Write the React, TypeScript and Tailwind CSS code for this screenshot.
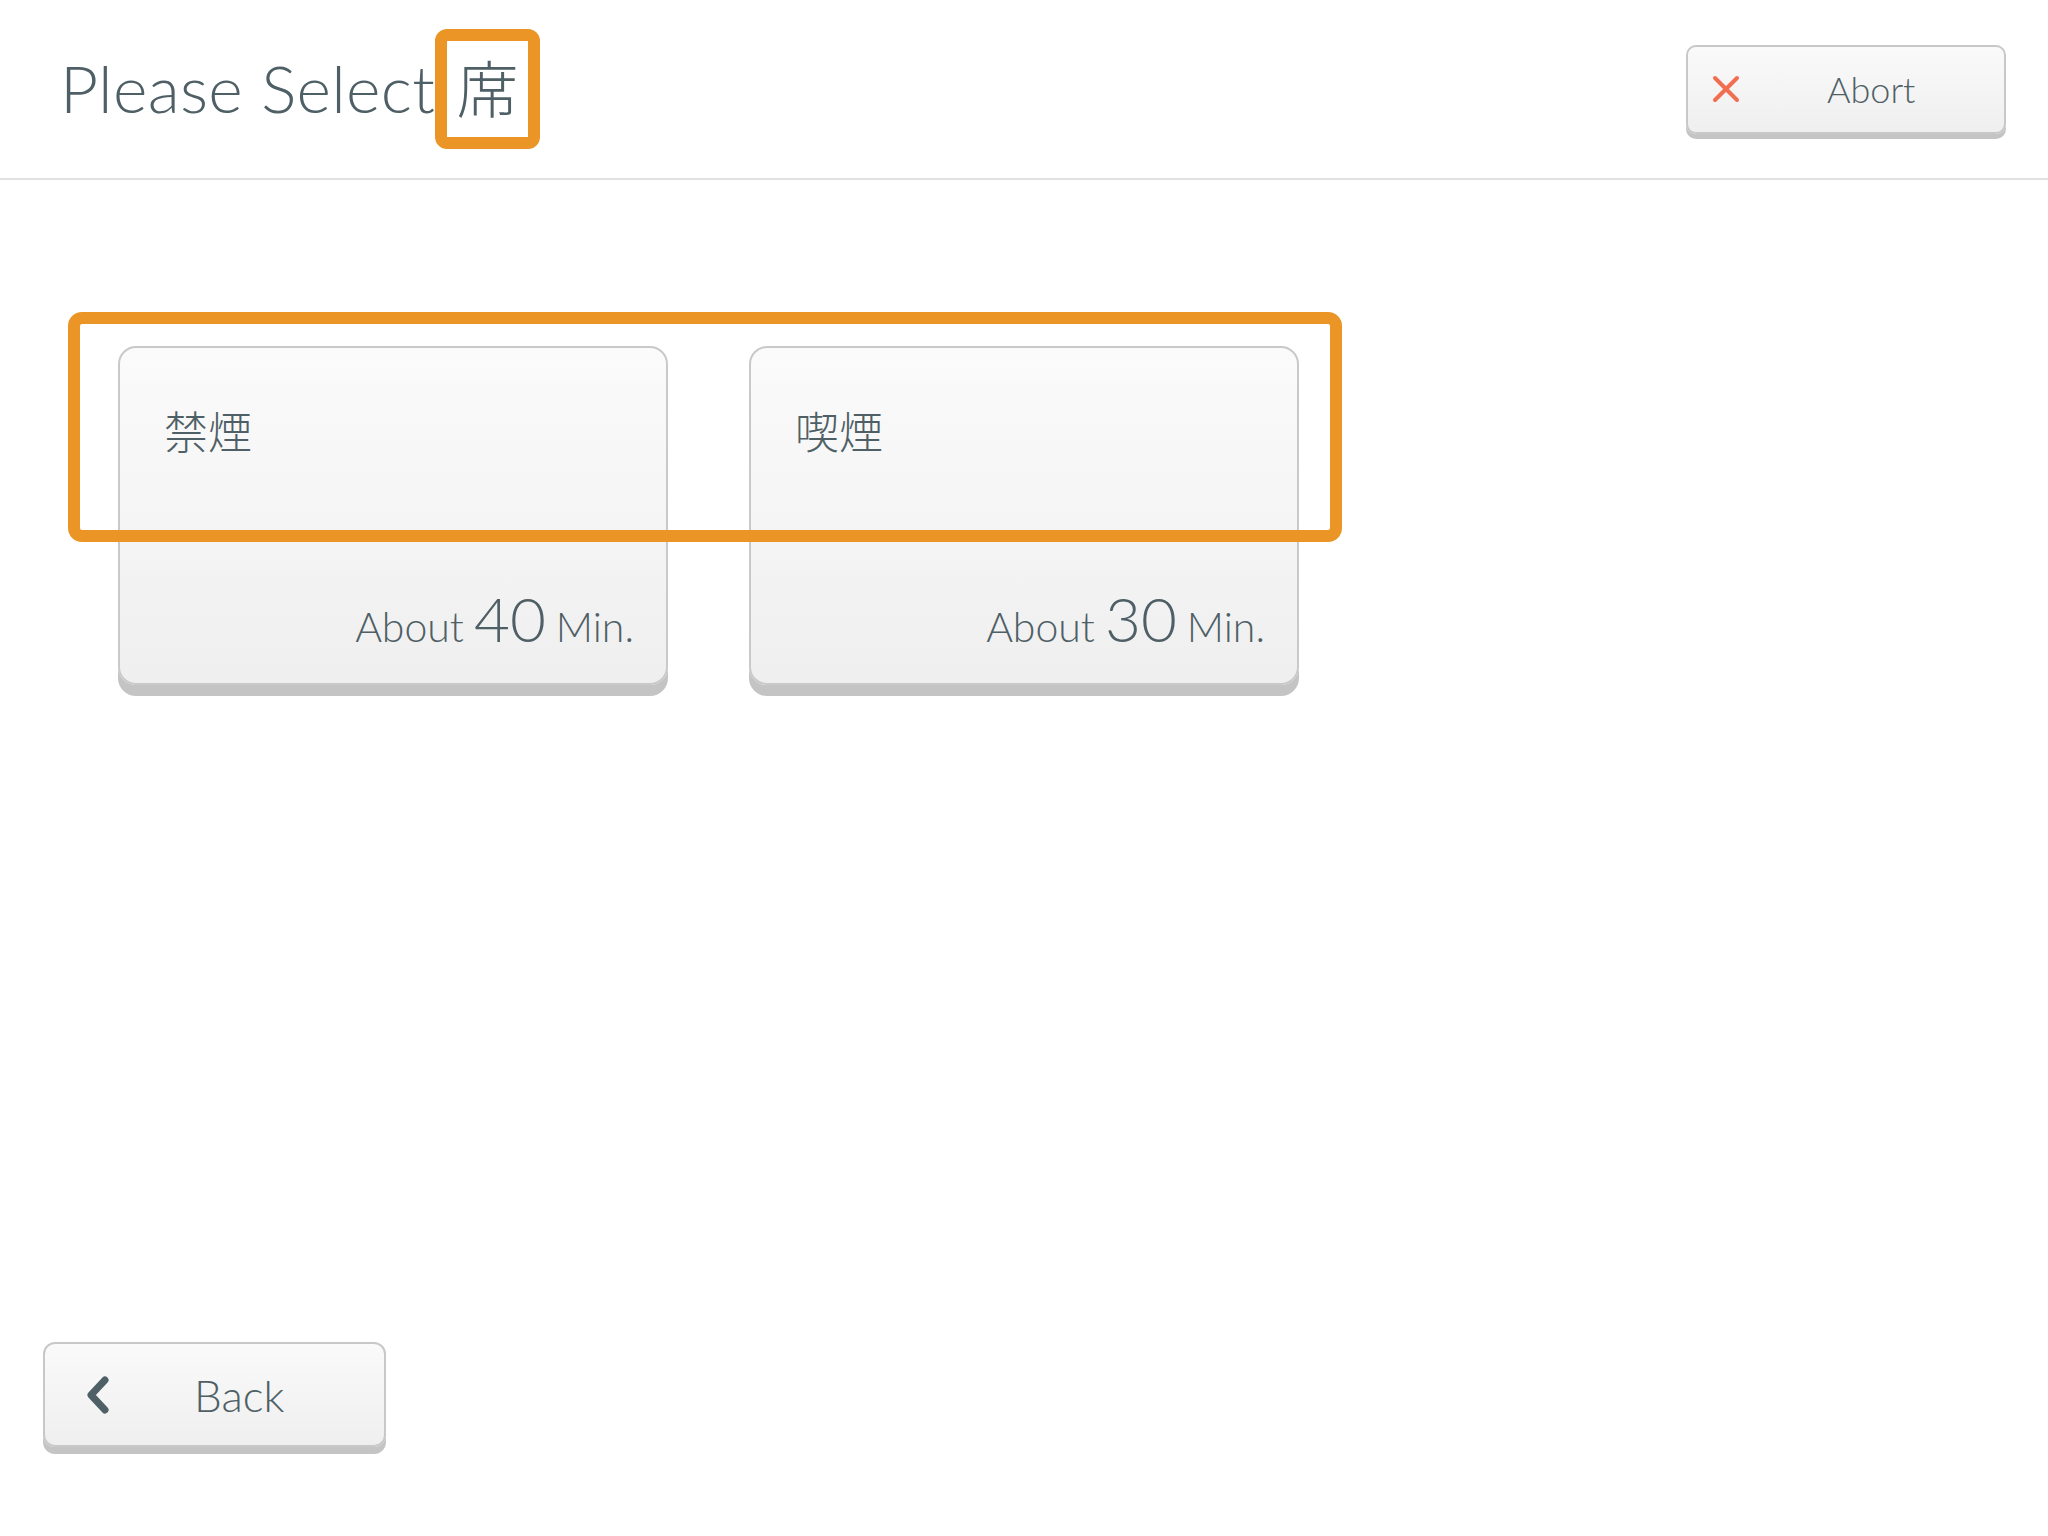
import React from "react";

const sans = "font-['Lato','Noto_Sans_CJK_JP',sans-serif]";

const seats = [
  { id: "non-smoking", label: "禁煙", minutes: 40 },
  { id: "smoking", label: "喫煙", minutes: 30 },
];

function CloseIcon() {
  return (
    <svg width="28" height="28" viewBox="0 0 28 28" fill="none">
      <path d="M3 3L25 25M25 3L3 25" stroke="#f26e50" strokeWidth="4" strokeLinecap="round" />
    </svg>
  );
}

function ChevronLeft() {
  return (
    <svg width="24" height="40" viewBox="0 0 24 40" fill="none">
      <path d="M19 5L5 20L19 35" stroke="#4f5f66" strokeWidth="7" strokeLinecap="round" strokeLinejoin="round" />
    </svg>
  );
}

function SeatCard({ label, minutes }: { label: string; minutes: number }) {
  return (
    <button className="flex h-[339px] w-[550px] flex-col justify-between rounded-[18px] border-2 border-[#c9c9c9] bg-gradient-to-b from-[#fbfbfb] to-[#efefef] pt-[58px] pb-[34px] pl-[44px] pr-[32px] text-left shadow-[0_11px_0_#c4c4c4]">
      <span className="text-[44px] font-light leading-[1.2] text-[#4f5f66]">{label}</span>
      <span className="flex items-baseline justify-end gap-[10px] font-light text-[#4f5f66]">
        <span className="text-[41px] leading-none">About</span>
        <span className="text-[62px] leading-none">{minutes}</span>
        <span className="text-[41px] leading-none">Min.</span>
      </span>
    </button>
  );
}

export default function App() {
  return (
    <div className={`flex h-screen flex-col bg-white ${sans}`}>
      <header className="flex h-[180px] items-center justify-between border-b-2 border-[#e1e1e1] pl-[60px] pr-[42px]">
        <h1 className="-mt-[3px] flex items-center text-[66px] font-light leading-none tracking-[0.3px] text-[#4f5f66]">
          <span>Please Select</span>
          <span className="mt-[3px] flex h-[120px] w-[105px] items-center justify-center rounded-[12px] border-[12px] border-[#ea9526] text-[62px] font-light leading-none">
            席
          </span>
        </h1>
        <button className="flex h-[89px] w-[320px] items-center rounded-[10px] border-2 border-[#c8c8c8] bg-gradient-to-b from-[#fafafa] to-[#efefef] pl-[24px] shadow-[0_5px_0_#c4c4c4]">
          <CloseIcon />
          <span className="ml-[87px] text-[36px] font-light leading-none text-[#4f5f66]">Abort</span>
        </button>
      </header>

      <main className="flex-1 pt-[166px] pl-[118px]">
        <div className="relative inline-flex gap-[81px]">
          {seats.map((seat) => (
            <SeatCard key={seat.id} label={seat.label} minutes={seat.minutes} />
          ))}
          {/* highlight annotation */}
          <div className="pointer-events-none absolute -left-[50px] -top-[34px] h-[230px] w-[1274px] rounded-[14px] border-[12px] border-[#ea9526]" />
        </div>
      </main>

      <footer className="pb-[89px] pl-[43px]">
        <button className="flex h-[105px] w-[343px] items-center rounded-[12px] border-2 border-[#c8c8c8] bg-gradient-to-b from-[#fafafa] to-[#efefef] pl-[41px] shadow-[0_7px_0_#c4c4c4]">
          <ChevronLeft />
          <span className="ml-[84px] text-[44px] font-light leading-none text-[#4f5f66]">Back</span>
        </button>
      </footer>
    </div>
  );
}
